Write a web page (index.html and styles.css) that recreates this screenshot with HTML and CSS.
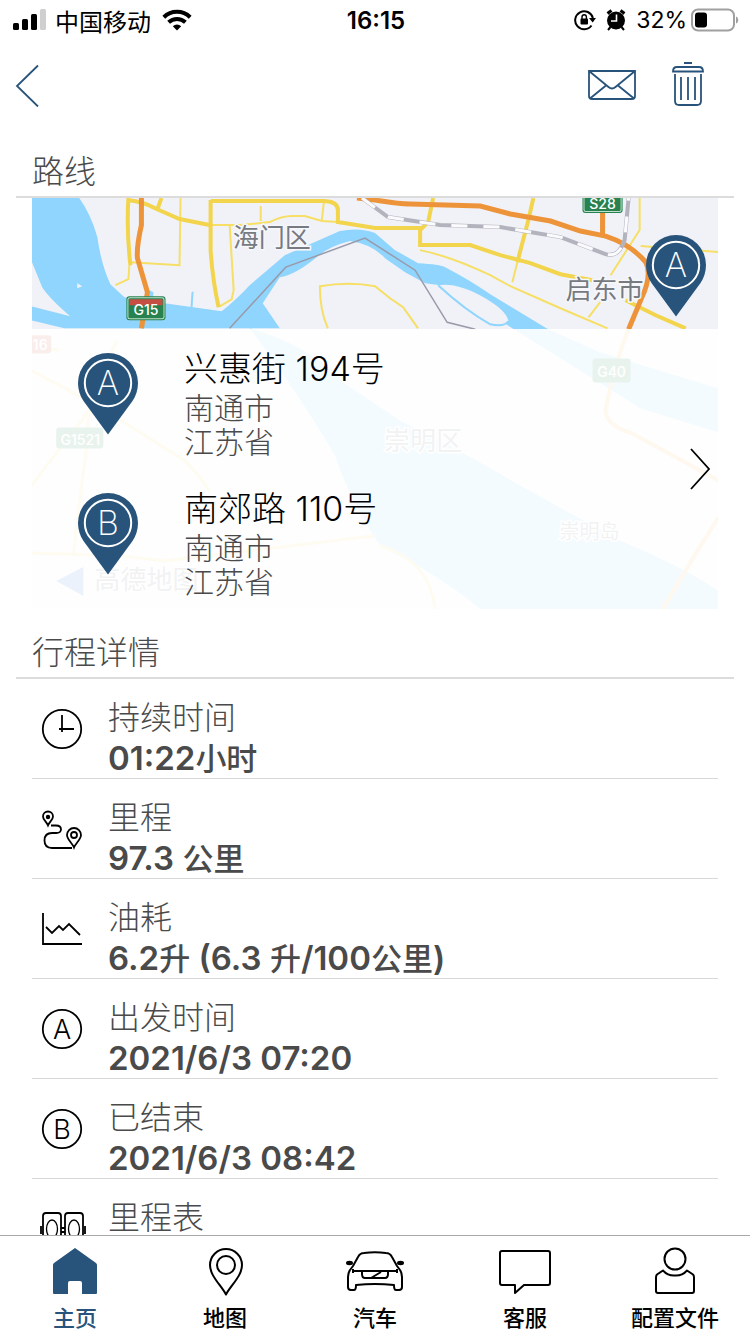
FILE: index.html
```html
<!DOCTYPE html>
<html lang="zh-CN">
<head>
<meta charset="utf-8">
<meta name="viewport" content="width=device-width, initial-scale=1">
<title>行程详情</title>
<link rel="stylesheet" href="styles.css">
</head>
<body>
<svg class="defs" aria-hidden="true">
  <symbol id="pin" viewBox="0 0 60 82">
    <path fill="#28537a" d="M30 81.500 5.500 48C2 43 0 36 0 30a30 30 0 0 1 60 0c0 6-2 13-5.500 18z"/>
    <circle cx="30" cy="30" r="23.200" fill="none" stroke="#fff" stroke-width="2"/>
  </symbol>
</svg>

<div class="app">
  <div class="status">
    <div class="status-left">
      <svg width="34" height="22" viewBox="0 0 34 22" aria-hidden="true">
        <rect x="0" y="14" width="6" height="7" rx="1.500"/>
        <rect x="9" y="10" width="6" height="11" rx="1.500"/>
        <rect x="18" y="5" width="6" height="16" rx="1.500"/>
        <rect x="27" y="0" width="6" height="21" rx="1.500" fill="#cfcfcf"/>
      </svg>
      <span class="carrier">中国移动</span>
      <svg class="wifi" width="30" height="22" viewBox="0 0 30 22" aria-hidden="true">
        <g fill="none" stroke="#000" stroke-width="4">
          <path d="M1.800 8.200a19 19 0 0 1 26.400 0"/>
          <path d="M6.600 13.300a12.300 12.300 0 0 1 16.800 0"/>
        </g>
        <path d="M15 21.500l-4.200-4.300a6.300 6.300 0 0 1 8.400 0z"/>
      </svg>
    </div>
    <div class="clock">16:15</div>
    <div class="status-right">
      <svg width="22" height="22" viewBox="0 0 22 22" aria-hidden="true">
        <path d="M17.500 16.500A9 9 0 1 1 18.900 9" fill="none" stroke="#000" stroke-width="2"/>
        <path d="M15 9h7l-3.300 4.500z"/>
        <rect x="6.500" y="9.500" width="7.500" height="6" rx="1"/>
        <path d="M8 10V8a2.200 2.200 0 0 1 4.400 0v2" fill="none" stroke="#000" stroke-width="1.400"/>
      </svg>
      <svg width="20" height="22" viewBox="0 0 20 22" aria-hidden="true">
        <circle cx="10" cy="11.500" r="9"/>
        <path d="M1.500 4.500l4-3M18.500 4.500l-4-3" fill="none" stroke="#000" stroke-width="3"/>
        <path d="M4.500 18 2 21M15.500 18l2.500 3" stroke="#000" stroke-width="2"/>
        <path d="M10.500 5.500v6.500H5" fill="none" stroke="#fff" stroke-width="1.600"/>
      </svg>
      <span class="percent">32%</span>
      <svg width="48" height="24" viewBox="0 0 48 24" aria-hidden="true">
        <rect x="1" y="1.500" width="42" height="21" rx="6" fill="none" stroke="#a0a0a0" stroke-width="2"/>
        <rect x="4" y="4.500" width="12" height="15" rx="3"/>
        <path d="M45 8.500c3 1 3 6 0 7z" fill="#a0a0a0"/>
      </svg>
    </div>
  </div>

  <header class="toolbar">
    <button class="tool" type="button" aria-label="返回">
      <svg width="24" height="46" viewBox="0 0 24 46"><path d="M23 4.500 2 25l21 20.500" fill="none" stroke="#28537a" stroke-width="1.800"/></svg>
    </button>
    <div class="toolbar-actions">
      <button class="tool" type="button" aria-label="邮件">
        <svg width="48" height="44" viewBox="0 0 48 44" fill="none" stroke="#28537a" stroke-width="1.800">
          <path d="M1 9h46v25q0 3-3 3H4q-3 0-3-3zM1 9l19.500 16q3.500 3 7 0L47 9M2 36.500 18 23.500M46 36.500 30 23.500"/>
        </svg>
      </button>
      <button class="tool" type="button" aria-label="删除">
        <svg width="32" height="44" viewBox="0 0 32 44" fill="none" stroke="#28537a" stroke-width="1.800">
          <path d="M12 1h8M1 9.500q0-4.500 4-4.500h22q4 0 4 4.500zM3 12v27q0 4 4 4h18q4 0 4-4V12M9 15v23M16 15v23M23 15v23"/>
        </svg>
      </button>
    </div>
  </header>

  <main class="content">
    <h2 class="section-title">路线</h2>
    <section class="route">
      <svg class="map" viewBox="32 198 686 410" preserveAspectRatio="xMidYMin slice" aria-hidden="true">
        <rect x="32" y="198" width="686" height="410" fill="#f0f2f8"/>
        <g fill="#8fd5fd">
          <path d="M32 198H80Q92 215 98 237 102 265 111 284L125 297 165 303 222 311Q236 300 250 285L285 255 340 231Q360 227 375 233L395 250 418 263Q440 264 445 267 470 280 490 294L546 328 600 352 718 388V432L640 408 512 328 470 300Q455 287 440 285L425 283 405 272 385 258Q372 244 350 241 330 246 318 256 295 275 280 277L263 303 280 328H100L65 328 32 320V306L71 316Q50 298 43 287L32 260z"/>
          <path d="M191 307l1-15 2-1-1 16zM150 290l4 2-1 12h-4z"/>
          <path d="M250 328Q310 345 345 383L400 420Q470 455 520 485L620 540Q680 565 718 590V608H480Q440 575 380 545 350 500 335 455 300 395 250 328z"/>
        </g>
        <path d="M438 285Q458 282 485 298 507 311 508 321 506 326 490 325 465 316 438 285z" fill="#f0f2f8"/>
        <path d="M438 285Q465 310 490 324 504 327 508 321" fill="none" stroke="#8fd5fd" stroke-width="2"/>
        <path d="M78 283l5 3-5 2z" fill="#f0f2f8"/>

        <g fill="none" stroke="#f6df64" stroke-width="2">
          <path d="M181 198 180 265 131 262M130 265 129 279 116 285"/>
          <path d="M210 225H240L270 222Q282 216 292 216H305L322 221 338 222M261 206V221M324 202 322 220M230 225 234 290 232 299 220 306"/>
          <path d="M328 328Q320 310 320 286 350 281 375 286L390 298 403 307 418 328"/>
          <path d="M420 250Q450 256 490 275L510 286 560 308 607 328M517 262 512 282M639 198V230L610 275M640 246 718 252M588 317 605 295"/>
        </g>
        <g fill="none" stroke="#f2d54d" stroke-width="4">
          <path d="M129 198Q127 230 131 265M128 200Q145 202 155 208L180 219 210 225M162 198 158 209"/>
          <path d="M211 200V250Q213 280 219 307M211 201H325Q338 202 338 210V222L375 228H420V245H470L500 255 530 263 560 274 592 280"/>
          <path d="M420 230 428 222 433 198M533 198 528 220 517 262M625 300 655 315 685 328"/>
        </g>
        <g fill="none" stroke="#ed943b" stroke-width="5">
          <path d="M142 198V225Q137 247 138 258L148 292 142 328"/>
          <path d="M357 198 375 200Q400 204 410 204L480 206 510 214 550 221 580 231 605 236Q630 244 645 262 652 275 640 300L628 329M602 205V236"/>
        </g>
        <g fill="none" stroke="#b3b3bd" stroke-width="4">
          <path d="M362 198 388 217 440 225 500 227 560 237 605 254Q618 258 624 240L628 198"/>
          <path d="M362 198 388 217 440 225 500 227 560 237 605 254Q618 258 624 240L628 198" stroke="#fbfbfe" stroke-width="3" stroke-dasharray="16 16"/>
        </g>
        <path d="M230 328 286 267 365 238 415 270 447 322 475 329" fill="none" stroke="#9a9aaa" stroke-width="1.500"/>
        <g fill="none" stroke="#f3b65e" stroke-width="4">
          <path d="M628 329Q615 360 605 410 606 425 630 432L718 480M718 516Q690 560 662 608"/>
          <path d="M32 370 70 390 130 425 185 460Q200 475 210 490M118 340Q85 400 87 450 80 500 74 555M32 485 90 410M32 552 120 555 165 560 375 535M32 345 60 350M380 545Q430 560 435 608" stroke="#f3cf6e" stroke-width="3"/>
        </g>

        <g class="road-sign">
          <rect x="127" y="296" width="39" height="24" rx="3" fill="#27824f"/>
          <path d="M130 299h33v6h-33z" fill="#c44f42"/>
          <rect x="128.500" y="297.500" width="36" height="21" rx="2" fill="none" stroke="#bfe0cc"/>
          <text x="146.500" y="315">G15</text>
          <rect x="582" y="188" width="40" height="25" rx="3" fill="#27824f"/>
          <rect x="583.500" y="189.500" width="37" height="22" rx="2" fill="none" stroke="#bfe0cc"/>
          <text x="602" y="209">S28</text>
          <rect x="57" y="427" width="47" height="21" rx="3" fill="#27824f"/>
          <text x="81" y="444">G1521</text>
          <rect x="592" y="358" width="38" height="24" rx="3" fill="#27824f"/>
          <text x="611" y="377">G40</text>
          <rect x="22" y="335" width="30" height="18" rx="3" fill="#c44f42"/>
          <text x="41" y="350">16</text>
        </g>
        <g class="place">
          <text x="272" y="247">海门区</text>
          <text x="604" y="299">启东市</text>
          <text x="423" y="449">崇明区</text>
          <text class="place-small" x="589" y="538">崇明岛</text>
          <text x="147" y="588">高德地图</text>
        </g>
        <path d="M57 580l27-14v29z" fill="#3a7be0"/>
      </svg>

      <div class="map-window">
        <div class="marker map-marker"><svg viewBox="0 0 60 82"><use href="#pin"/><text x="30" y="42">A</text></svg></div>
      </div>

      <a class="stops" href="#route">
        <div class="stop">
          <div class="marker"><svg viewBox="0 0 60 82"><use href="#pin"/><text x="30" y="42">A</text></svg></div>
          <div class="address">
            <div class="street">兴惠街 194号</div>
            <div class="region">南通市</div>
            <div class="region">江苏省</div>
          </div>
        </div>
        <div class="stop">
          <div class="marker"><svg viewBox="0 0 60 82"><use href="#pin"/><text x="30" y="42">B</text></svg></div>
          <div class="address">
            <div class="street">南郊路 110号</div>
            <div class="region">南通市</div>
            <div class="region">江苏省</div>
          </div>
        </div>
        <svg class="chevron" width="22" height="42" viewBox="0 0 22 42" aria-hidden="true"><path d="M2 1l18 20L2 41" fill="none" stroke="#000" stroke-width="1.800"/></svg>
      </a>
    </section>

    <h2 class="section-title">行程详情</h2>
    <ul class="details">
      <li class="detail">
        <svg class="detail-icon" viewBox="0 0 48 44"><circle cx="24" cy="22" r="19.200"/><path d="M24 8v17M21 22h15"/></svg>
        <div><div class="label">持续时间</div><div class="value">01:22<span class="unit">小时</span></div></div>
      </li>
      <li class="detail">
        <svg class="detail-icon" viewBox="0 0 48 44">
          <path d="M10 18.500C8 14 5 12.500 5 9.500a5 5 0 0 1 10 0c0 3-3 4.500-5 9zM36 40.500c-2-5-7-8-7-12.500a7 7 0 0 1 14 0c0 4.500-5 7.500-7 12.500zM13 18.500h5q5 0 5 3.800T18 26h-4q-7.500 0-7.500 7.500T14 41h20"/>
          <circle cx="36" cy="28" r="3"/><circle cx="10" cy="10" r="1.300" fill="#000"/>
        </svg>
        <div><div class="label">里程</div><div class="value">97.3 <span class="unit">公里</span></div></div>
      </li>
      <li class="detail">
        <svg class="detail-icon" viewBox="0 0 48 44"><path d="M5 6v31h39M8 20l6 6 7-7 4 4 6-6 11 11"/></svg>
        <div><div class="label">油耗</div><div class="value">6.2<span class="unit">升</span> (6.3 <span class="unit">升</span>/100<span class="unit">公里</span>)</div></div>
      </li>
      <li class="detail">
        <svg class="detail-icon" viewBox="0 0 48 44"><circle cx="24" cy="22" r="19.200"/><text x="24" y="32">A</text></svg>
        <div><div class="label">出发时间</div><div class="value">2021/6/3 07:20</div></div>
      </li>
      <li class="detail">
        <svg class="detail-icon" viewBox="0 0 48 44"><circle cx="24" cy="22" r="19.200"/><text x="24" y="32">B</text></svg>
        <div><div class="label">已结束</div><div class="value">2021/6/3 08:42</div></div>
      </li>
      <li class="detail">
        <svg class="detail-icon" viewBox="0 0 48 44">
          <path d="M5 38V9q0-3 3-3h12q3 0 3 3v29zM27 38V9q0-3 3-3h12q3 0 3 3v29zM3 19v8M47 19v8M23 21h4M23 25h4"/>
          <ellipse cx="14" cy="22" rx="5.500" ry="9" stroke-width="1.300"/><ellipse cx="36" cy="22" rx="5.500" ry="9" stroke-width="1.300"/>
        </svg>
        <div><div class="label">里程表</div></div>
      </li>
    </ul>
  </main>

  <nav class="tabs">
    <a class="tab active" href="#home">
      <svg width="60" height="52" viewBox="0 0 60 52"><path d="M30 2 51 17q1 1 1 2v28q0 1-1 1H37V37q0-2-2-2H25q-2 0-2 2v11H9q-1 0-1-1V19q0-1 1-2z" fill="#28537a"/></svg>
      <span>主页</span>
    </a>
    <a class="tab" href="#map">
      <svg class="line-icon" width="60" height="52" viewBox="0 0 60 52"><path d="M31 48.500C26 39 15 30 15 19a16 16 0 0 1 32 0c0 11-11 20-16 29.500z"/><circle cx="31" cy="19" r="9"/></svg>
      <span>地图</span>
    </a>
    <a class="tab" href="#car">
      <svg class="line-icon" width="60" height="52" viewBox="0 0 60 52">
        <path d="M8 20l5-9q2-4 6-4 11-1.500 22 0 4 0 6 4l5 9 3 4q2 3 2 7v10q0 3-3 3h-3q-2 0-2-5-19-2-38 0 0 5-2 5H6q-3 0-3-3V31q0-4 2-7z"/>
        <path d="M8 23v4M52 23v4M8 25h9M52 25h-9M17 25h26v3q0 4-3 4H20q-3 0-3-4zM26 32l10-6"/>
        <ellipse cx="4.500" cy="17" rx="2.500" ry="1.200" fill="#000"/><ellipse cx="55.500" cy="17" rx="2.500" ry="1.200" fill="#000"/>
      </svg>
      <span>汽车</span>
    </a>
    <a class="tab" href="#service">
      <svg class="line-icon" width="60" height="52" viewBox="0 0 60 52"><path d="M7 5h46q2 0 2 2v30q0 2-2 2H29l-9 8v-8H7q-2 0-2-2V7q0-2 2-2z"/></svg>
      <span>客服</span>
    </a>
    <a class="tab" href="#profile">
      <svg class="line-icon" width="60" height="52" viewBox="0 0 60 52"><circle cx="30" cy="13" r="10.500"/><path d="M18 24.500q5 5.500 12 5 7 .5 12-5l6 4q1 1 1 3V45q0 2-2 2H13q-2 0-2-2V31.500q0-2 1-3z"/></svg>
      <span>配置文件</span>
    </a>
  </nav>
</div>
</body>
</html>
```
FILE: styles.css
```css
* {
  box-sizing: border-box;
}

body {
  margin: 0;
  background: #fff;
  color: #4a4a4a;
  font-family: Inter, "Noto Sans CJK SC", sans-serif;
}

a {
  color: inherit;
  text-decoration: none;
}

svg {
  display: block;
  flex: none;
}

.defs {
  position: absolute;
  width: 0;
  height: 0;
}

.app {
  display: flex;
  flex-direction: column;
  height: 100vh;
}

/* Status bar */
.status {
  display: grid;
  grid-template-columns: 1fr auto 1fr;
  align-items: center;
  height: 40px;
  padding: 0 11px 0 13px;
  color: #000;
}

.status-left,
.status-right {
  display: flex;
  align-items: center;
}

.status-left {
  gap: 8px;
}

.status-right {
  justify-content: flex-end;
  gap: 10px;
}

.carrier {
  font-size: 24px;
}

.wifi {
  margin-left: 3px;
}

.clock {
  font-size: 24px;
  font-weight: 600;
}

.percent {
  margin-right: -6px;
  font-size: 23px;
}

/* Toolbar */
.toolbar {
  display: flex;
  align-items: center;
  justify-content: space-between;
  height: 88px;
  padding: 0 46px 0 15px;
}

.toolbar-actions {
  display: flex;
  gap: 36px;
}

.tool {
  padding: 0;
  border: 0;
  background: none;
}

/* Content */
.content {
  flex: 1;
  min-height: 0;
  overflow: hidden;
}

.section-title {
  margin: 0 16px;
  padding: 22px 16px 2px;
  border-bottom: 2px solid #dcdcdc;
  font-size: 32px;
  font-weight: 300;
  line-height: 44px;
}

.route {
  position: relative;
  margin: 0 32px;
  overflow: hidden;
}

.map {
  position: absolute;
  inset: 0;
  width: 100%;
  height: 100%;
}

.road-sign text {
  fill: #fff;
  font-size: 14px;
  font-weight: 500;
  text-anchor: middle;
}

.place text {
  fill: #777a80;
  stroke: #f6f7fb;
  stroke-width: 3px;
  paint-order: stroke;
  font-size: 26px;
  text-anchor: middle;
}

.place .place-small {
  font-size: 20px;
}

.map-window {
  position: relative;
  height: 131px;
}

.marker {
  width: 60px;
}

.marker text {
  fill: #fff;
  font-size: 34px;
  font-weight: 200;
  text-anchor: middle;
}

.map-marker {
  position: absolute;
  top: 37px;
  right: 12px;
}

.stops {
  position: relative;
  display: block;
  background: rgba(255, 255, 255, 0.9);
}

.stop {
  display: flex;
  gap: 46px;
  height: 140px;
  padding: 20px 46px 0;
}

.stop .marker {
  padding-top: 4px;
}

.street {
  margin-bottom: 2px;
  color: #000;
  font-size: 34px;
  font-weight: 300;
  line-height: 40px;
}

.region {
  font-size: 30px;
  font-weight: 300;
  line-height: 34px;
}

.chevron {
  position: absolute;
  top: 50%;
  right: 7px;
  margin-top: -21px;
}

/* Trip details */
.details {
  margin: 0 32px;
  padding: 0;
  list-style: none;
}

.detail {
  display: flex;
  gap: 22px;
  height: 100px;
  padding: 19px 0 0 6px;
  border-bottom: 1px solid #d8d8d8;
}

.detail-icon {
  width: 48px;
  height: 44px;
  margin-top: 9px;
  fill: none;
  stroke: #000;
  stroke-width: 1.8;
}

.detail-icon text {
  fill: #000;
  stroke: none;
  font-size: 27px;
  font-weight: 300;
  text-anchor: middle;
}

.label,
.value {
  line-height: 40px;
}

.label {
  font-size: 32px;
  font-weight: 300;
}

.value {
  font-size: 33px;
  font-weight: 600;
}

.unit {
  font-size: 31px;
  font-weight: 500;
}

/* Tab bar */
.tabs {
  display: grid;
  grid-template-columns: repeat(5, 1fr);
  height: 99px;
  border-top: 1px solid #a8a8a8;
  background: #fff;
  color: #000;
}

.tab {
  display: flex;
  flex-direction: column;
  align-items: center;
  gap: 4px;
  padding-top: 10px;
  font-size: 22px;
  font-weight: 500;
  line-height: 32px;
}

.tab.active {
  color: #28537a;
}

.line-icon {
  fill: none;
  stroke: #000;
  stroke-width: 2;
  stroke-linejoin: round;
}
```
